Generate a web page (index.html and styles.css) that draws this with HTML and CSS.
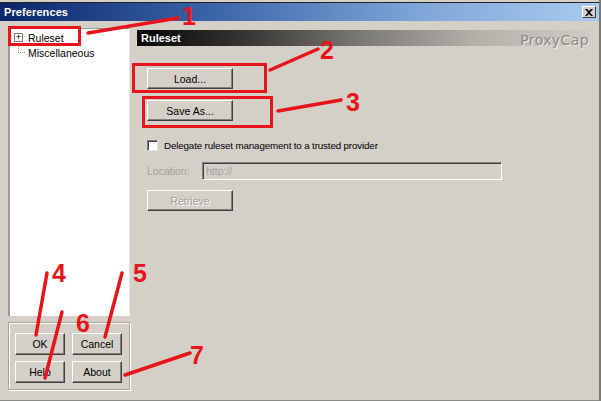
FILE: index.html
```html
<!DOCTYPE html>
<html>
<head>
<meta charset="utf-8">
<link rel="stylesheet" href="styles.css">
</head>
<body>
<div class="window">
  <div class="titlebar">
    <span class="title">Preferences</span>
    <span class="close">
      <svg width="8" height="7" viewBox="0 0 8 7"><path d="M0 0h2l2 2 2-2h2L5 3.5 8 7H6L4 5 2 7H0l3-3.5z" fill="#000"/></svg>
    </span>
  </div>
  <div class="content">
    <div class="left">
      <div class="tree">
        <div class="node">
          <span class="expander">+</span>
          <span class="label">Ruleset</span>
        </div>
        <div class="node child">
          <span class="branch"></span>
          <span class="label">Miscellaneous</span>
        </div>
      </div>
      <div class="group">
        <button class="btn small">OK</button>
        <button class="btn small">Cancel</button>
        <button class="btn small">Help</button>
        <button class="btn small">About</button>
      </div>
    </div>
    <div class="right">
      <div class="header">
        <span class="header-title">Ruleset</span>
        <span class="brand">ProxyCap</span>
      </div>
      <div class="pane">
        <button class="btn wide first">Load...</button>
        <button class="btn wide">Save As...</button>
        <label class="check"><span class="box"></span>Delegate ruleset management to a trusted provider</label>
        <div class="location">
          <span class="loc-label">Location:</span>
          <span class="field">http://</span>
        </div>
        <button class="btn wide disabled">Retrieve</button>
      </div>
    </div>
  </div>

  <svg class="marks" width="601" height="401" viewBox="0 0 601 401">
    <g fill="none" stroke="#e8141c" stroke-width="3">
      <rect x="9.5" y="27.5" width="70" height="17"/>
      <rect x="133.5" y="64.5" width="132" height="27"/>
      <rect x="143.5" y="97.5" width="128" height="29"/>
    </g>
    <g stroke="#e8141c" stroke-width="3.5" stroke-linecap="round">
      <line x1="88" y1="33" x2="178" y2="18"/>
      <line x1="270" y1="70" x2="318" y2="49"/>
      <line x1="278" y1="111" x2="341" y2="100"/>
      <line x1="47" y1="273" x2="36" y2="335"/>
      <line x1="122" y1="273" x2="105" y2="337"/>
      <line x1="62" y1="312" x2="45" y2="378"/>
      <line x1="125" y1="375" x2="190" y2="353"/>
    </g>
  </svg>
  <span class="num n1">1</span>
  <span class="num n2">2</span>
  <span class="num n3">3</span>
  <span class="num n4">4</span>
  <span class="num n5">5</span>
  <span class="num n6">6</span>
  <span class="num n7">7</span>
</div>
</body>
</html>
```

FILE: styles.css
```css
html, body {
  margin: 0;
  padding: 0;
  background: #f4f2ee;
}

.window {
  position: relative;
  width: 601px;
  height: 401px;
  box-sizing: border-box;
  padding-top: 2px;
  background: #d4d0c8;
  border-right: 2px solid #7a7874;
  border-bottom: 1px solid #8c8a86;
  font-family: "Liberation Sans", "DejaVu Sans", sans-serif;
  font-size: 10.5px;
  color: #000;
  overflow: hidden;
  display: flex;
  flex-direction: column;
}

.titlebar {
  height: 18px;
  display: flex;
  align-items: center;
  justify-content: space-between;
  padding: 0 3px 0 4px;
  background: linear-gradient(to right, #0a246a 0%, #3a64a8 35%, #7fa6d8 70%, #a9cbf0 100%);
  border-top: 1px solid #222;
}

.title {
  color: #fff;
  font-weight: bold;
  font-size: 11px;
  letter-spacing: 0.1px;
}

.close {
  width: 14px;
  height: 12px;
  box-sizing: border-box;
  background: #d4d0c8;
  border: 1px solid;
  border-color: #fff #404040 #404040 #fff;
  display: flex;
  align-items: center;
  justify-content: center;
}

.content {
  flex: 1;
  display: flex;
  padding: 7px 0 0 8px;
}

.left {
  width: 122px;
  display: flex;
  flex-direction: column;
}

.tree {
  height: 288px;
  box-sizing: border-box;
  background: #fff;
  border-left: 2px solid #9a9892;
  border-top: 1px solid #9a9892;
  border-right: 1px solid #e8e6e2;
  padding: 1px 0 0 4px;
}

.node {
  display: flex;
  align-items: center;
  height: 15px;
}

.expander {
  width: 9px;
  height: 9px;
  box-sizing: border-box;
  border: 1px solid #808080;
  font-size: 9px;
  line-height: 6px;
  text-align: center;
  margin-right: 5px;
  color: #000;
}

.branch {
  width: 7px;
  height: 8px;
  margin: -8px 3px 0 4px;
  border-left: 1px dotted #888;
  border-bottom: 1px dotted #888;
  box-sizing: border-box;
}

.group {
  margin-top: 6px;
  height: 68px;
  box-sizing: border-box;
  border: 1px solid #a8a49c;
  box-shadow: inset 1px 1px 0 #fff, 1px 1px 0 #fff;
  display: grid;
  grid-template-columns: 50px 50px;
  column-gap: 7px;
  row-gap: 6px;
  padding: 10px 0 0 6px;
  align-content: start;
}

.btn {
  font-family: inherit;
  font-size: 10.5px;
  color: #000;
  background: #d4d0c8;
  border: 1px solid;
  border-color: #fff #404040 #404040 #fff;
  box-shadow: inset -1px -1px 0 #808080;
  padding: 0;
  margin: 0;
}

.small {
  width: 50px;
  height: 22px;
}

.right {
  margin-left: 7px;
  width: 453px;
  display: flex;
  flex-direction: column;
}

.header {
  margin-top: 2px;
  height: 16px;
  display: flex;
  align-items: center;
  justify-content: space-between;
  padding: 0 1px 0 4px;
  background: linear-gradient(to right, #050505 0%, #3a3836 25%, #7c7a76 50%, #b4b1ab 75%, #cfcbc4 100%);
}

.header-title {
  color: #fff;
  font-weight: bold;
  font-size: 11px;
}

.brand {
  font-family: "DejaVu Sans", sans-serif;
  font-size: 14px;
  color: #8a8884;
  text-shadow: 1px 1px 0 #f0eee8;
  margin-top: 3px;
  letter-spacing: 0.4px;
}

.pane {
  display: flex;
  flex-direction: column;
  align-items: flex-start;
  padding-left: 10px;
}

.wide {
  width: 86px;
  height: 21px;
  margin-top: 11px;
}

.wide.first {
  margin-top: 22px;
}

.disabled {
  color: #a4a09a;
  text-shadow: 1px 1px 0 #fff;
}

.check {
  display: flex;
  align-items: center;
  margin-top: 19px;
  height: 11px;
  font-size: 9.8px;
  letter-spacing: -0.15px;
}

.box {
  width: 11px;
  height: 11px;
  box-sizing: border-box;
  background: #fff;
  border: 1px solid;
  border-color: #808080 #e8e6e2 #e8e6e2 #808080;
  box-shadow: inset 1px 1px 0 #404040;
  margin-right: 6px;
}

.location {
  display: flex;
  align-items: center;
  margin-top: 11px;
  height: 18px;
}

.loc-label {
  color: #a4a09a;
  width: 55px;
}

.field {
  width: 300px;
  height: 18px;
  box-sizing: border-box;
  border: 1px solid;
  border-color: #808080 #fff #fff #808080;
  box-shadow: inset 1px 1px 0 #404040;
  color: #a4a09a;
  padding: 2px 0 0 3px;
}

.location + .btn {
  margin-top: 10px;
}

.marks {
  position: absolute;
  left: 0;
  top: 0;
  pointer-events: none;
}

.num {
  position: absolute;
  font-family: "Liberation Sans", sans-serif;
  font-weight: bold;
  font-size: 25px;
  line-height: 1;
  color: #e8141c;
}

.n1 { left: 182px; top: 4px; }
.n2 { left: 320px; top: 38px; }
.n3 { left: 346px; top: 90px; }
.n4 { left: 52px; top: 261px; }
.n5 { left: 133px; top: 261px; }
.n6 { left: 76px; top: 311px; }
.n7 { left: 190px; top: 343px; }
```
